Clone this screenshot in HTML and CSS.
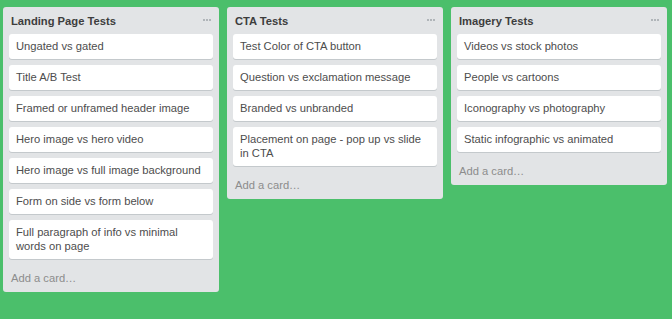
FILE: index.html
```html
<!DOCTYPE html>
<html lang="en">
<head>
    <meta charset="UTF-8">
    <meta name="viewport" content="width=device-width, initial-scale=1.0">
    <title>Board</title>
    <link rel="stylesheet" href="styles.css">
</head>
<body>
    <div class="board">
        <div class="list">
            <div class="list-header">
                <h2>Landing Page Tests</h2>
                <svg class="menu" width="8" height="3" viewBox="0 0 8 3"><rect x="0" y="0" width="2" height="2"/><rect x="3" y="0" width="2" height="2"/><rect x="6" y="0" width="2" height="2"/></svg>
            </div>
            <div class="cards">
                <div class="card">Ungated vs gated</div>
                <div class="card">Title A/B Test</div>
                <div class="card">Framed or unframed header image</div>
                <div class="card">Hero image vs hero video</div>
                <div class="card">Hero image vs full image background</div>
                <div class="card">Form on side vs form below</div>
                <div class="card">Full paragraph of info vs minimal words on page</div>
            </div>
            <div class="add-card">Add a card…</div>
        </div>

        <div class="list">
            <div class="list-header">
                <h2>CTA Tests</h2>
                <svg class="menu" width="8" height="3" viewBox="0 0 8 3"><rect x="0" y="0" width="2" height="2"/><rect x="3" y="0" width="2" height="2"/><rect x="6" y="0" width="2" height="2"/></svg>
            </div>
            <div class="cards">
                <div class="card">Test Color of CTA button</div>
                <div class="card">Question vs exclamation message</div>
                <div class="card">Branded vs unbranded</div>
                <div class="card">Placement on page - pop up vs slide in CTA</div>
            </div>
            <div class="add-card">Add a card…</div>
        </div>

        <div class="list">
            <div class="list-header">
                <h2>Imagery Tests</h2>
                <svg class="menu" width="8" height="3" viewBox="0 0 8 3"><rect x="0" y="0" width="2" height="2"/><rect x="3" y="0" width="2" height="2"/><rect x="6" y="0" width="2" height="2"/></svg>
            </div>
            <div class="cards">
                <div class="card">Videos vs stock photos</div>
                <div class="card">People vs cartoons</div>
                <div class="card">Iconography vs photography</div>
                <div class="card">Static infographic vs animated</div>
            </div>
            <div class="add-card">Add a card…</div>
        </div>
    </div>
</body>
</html>
```

FILE: styles.css
```css
* {
    margin: 0;
    padding: 0;
    box-sizing: border-box;
}

body {
    font-family: 'Liberation Sans', Arial, sans-serif;
    font-size: 11.2px;
    background: #4bbf6b;
    min-height: 100vh;
}

.board {
    display: flex;
    align-items: flex-start;
    gap: 8px;
    padding: 7px 0 0 3px;
}

.list {
    width: 216px;
    background: #e2e4e6;
    border-radius: 3px;
}

.list-header {
    height: 27px;
    display: flex;
    align-items: center;
    justify-content: space-between;
    padding: 1px 8px 0 8px;
}

.list-header h2 {
    font-size: 11.2px;
    font-weight: bold;
    color: #3d3d3d;
}

.menu {
    fill: #b0b5b9;
    margin-top: -1px;
}

.cards {
    padding: 0 6px;
}

.card {
    background: white;
    border-radius: 3px;
    box-shadow: 0 1px 0 #c4c9cc;
    padding: 5px 7px 6px 7px;
    line-height: 14px;
    color: #4d4d4d;
    margin-bottom: 6px;
}

.add-card {
    height: 27px;
    line-height: 26px;
    padding-left: 8px;
    color: #8c8c8c;
}
```
